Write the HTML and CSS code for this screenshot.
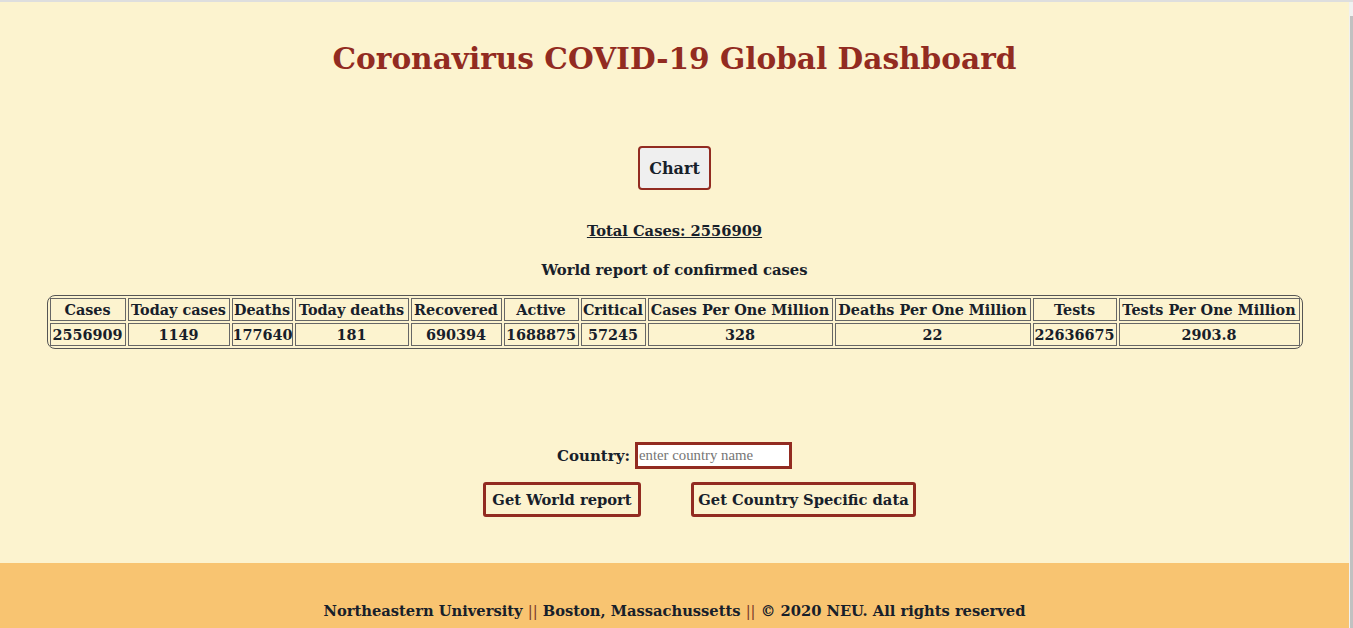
FILE: index.html
```html
<!DOCTYPE html>
<html lang="en">
<head>
<meta charset="utf-8">
<title>Coronavirus COVID-19 Global Dashboard</title>
<link rel="stylesheet" href="styles.css">
</head>
<body>
<div class="frame">
  <div class="page">
    <main class="main">
      <h1 class="title">Coronavirus COVID-19 Global Dashboard</h1>
      <button class="chart-btn">Chart</button>
      <p class="total">Total Cases: 2556909</p>
      <p class="subtitle">World report of confirmed cases</p>
      <table class="report">
        <colgroup>
          <col class="w1"><col class="w2"><col class="w3"><col class="w4"><col class="w5"><col class="w6"><col class="w7"><col class="w8"><col class="w9"><col class="w10"><col class="w11">
        </colgroup>
        <thead>
          <tr>
            <th>Cases</th><th>Today cases</th><th>Deaths</th><th>Today deaths</th><th>Recovered</th><th>Active</th><th>Critical</th><th>Cases Per One Million</th><th>Deaths Per One Million</th><th>Tests</th><th>Tests Per One Million</th>
          </tr>
        </thead>
        <tbody>
          <tr>
            <td>2556909</td><td>1149</td><td>177640</td><td>181</td><td>690394</td><td>1688875</td><td>57245</td><td>328</td><td>22</td><td>22636675</td><td>2903.8</td>
          </tr>
        </tbody>
      </table>
      <div class="search">
        <label class="search-label" for="country">Country:</label>
        <input id="country" class="search-input" type="text" placeholder="enter country name">
      </div>
      <div class="actions">
        <button class="action-btn btn-world">Get World report</button>
        <button class="action-btn btn-country">Get Country Specific data</button>
      </div>
    </main>
    <footer class="footer">
      <p class="footer-text">Northeastern University <span class="sep">||</span> Boston, Massachussetts <span class="sep">||</span> © 2020 NEU. All rights reserved</p>
    </footer>
  </div>
  <div class="scrollbar"><div class="thumb"></div></div>
</div>
</body>
</html>
```
FILE: styles.css
```css
html, body {
  margin: 0;
  padding: 0;
  height: 100%;
}
body {
  font-family: "DejaVu Serif", Georgia, serif;
  color: #17202a;
  background: #fcf3cf;
  overflow: hidden;
}
.frame {
  display: flex;
  height: 100%;
  border-top: 2px solid #dedede;
  box-sizing: border-box;
}
.page {
  width: 1349px;
  display: flex;
  flex-direction: column;
  background: #fcf3cf;
}
.scrollbar {
  flex: 1;
  background: #f1f1f1;
  padding-top: 14px;
  padding-left: 1px;
  display: flex;
}
.thumb {
  flex: 1;
  background: #c1c1c1;
}
.main {
  display: flex;
  flex-direction: column;
  align-items: center;
  height: 561px;
}
.title {
  margin: 39px 0 0;
  font-size: 29.6px;
  line-height: 36px;
  font-weight: bold;
  color: #922b21;
}
.chart-btn {
  margin-top: 69px;
  width: 73px;
  height: 44px;
  font-family: inherit;
  font-size: 16px;
  font-weight: bold;
  color: #17202a;
  background: #efefef;
  border: 2px solid #922b21;
  border-radius: 4px;
  padding: 0;
}
.total {
  margin: 32px 0 0;
  font-size: 14.7px;
  line-height: 18px;
  font-weight: bold;
  text-decoration: underline;
}
.subtitle {
  margin: 21px 0 0;
  font-size: 14.8px;
  line-height: 18px;
  font-weight: bold;
}
.report {
  margin-top: 16px;
  width: 1255px;
  table-layout: fixed;
  border: 1px solid #555;
  border-radius: 8px;
  border-spacing: 2px;
}
.report th, .report td {
  border: 1px solid #666;
  padding: 0;
  height: 21px;
  font-size: 14.4px;
  font-weight: bold;
  text-align: center;
  white-space: nowrap;
  overflow: hidden;
}
.w1 { width: 76px; }
.w2 { width: 102px; }
.w3 { width: 61px; }
.w4 { width: 114px; }
.w5 { width: 91px; }
.w6 { width: 75px; }
.w7 { width: 65px; }
.w8 { width: 185px; }
.w9 { width: 196px; }
.w10 { width: 84px; }
.w11 { width: 181px; }
.search {
  margin-top: 93px;
  display: flex;
  align-items: center;
  gap: 5px;
}
.search-label {
  font-size: 15px;
  font-weight: bold;
}
.search-input {
  width: 157px;
  height: 27px;
  box-sizing: border-box;
  border: 3px solid #922b21;
  background: #fff;
  padding: 0 0 0 1px;
  font-family: "Liberation Serif", serif;
  font-size: 14.8px;
  outline: none;
}
.search-input::placeholder {
  color: #757575;
}
.actions {
  margin-top: 13px;
  display: flex;
}
.action-btn {
  margin-left: 50px;
  height: 35px;
  padding: 0;
  font-family: inherit;
  font-size: 14.7px;
  font-weight: bold;
  color: #17202a;
  background: transparent;
  border: 3px solid #922b21;
  border-radius: 3px;
}
.btn-world { width: 158px; }
.btn-country { width: 225px; }
.footer {
  flex: 1;
  background: #f8c471;
  display: flex;
  justify-content: center;
}
.footer-text {
  margin: 39px 0 0;
  font-size: 14.7px;
  line-height: 18px;
  font-weight: bold;
}
.sep {
  color: #7b3a2a;
  font-weight: normal;
}
```
